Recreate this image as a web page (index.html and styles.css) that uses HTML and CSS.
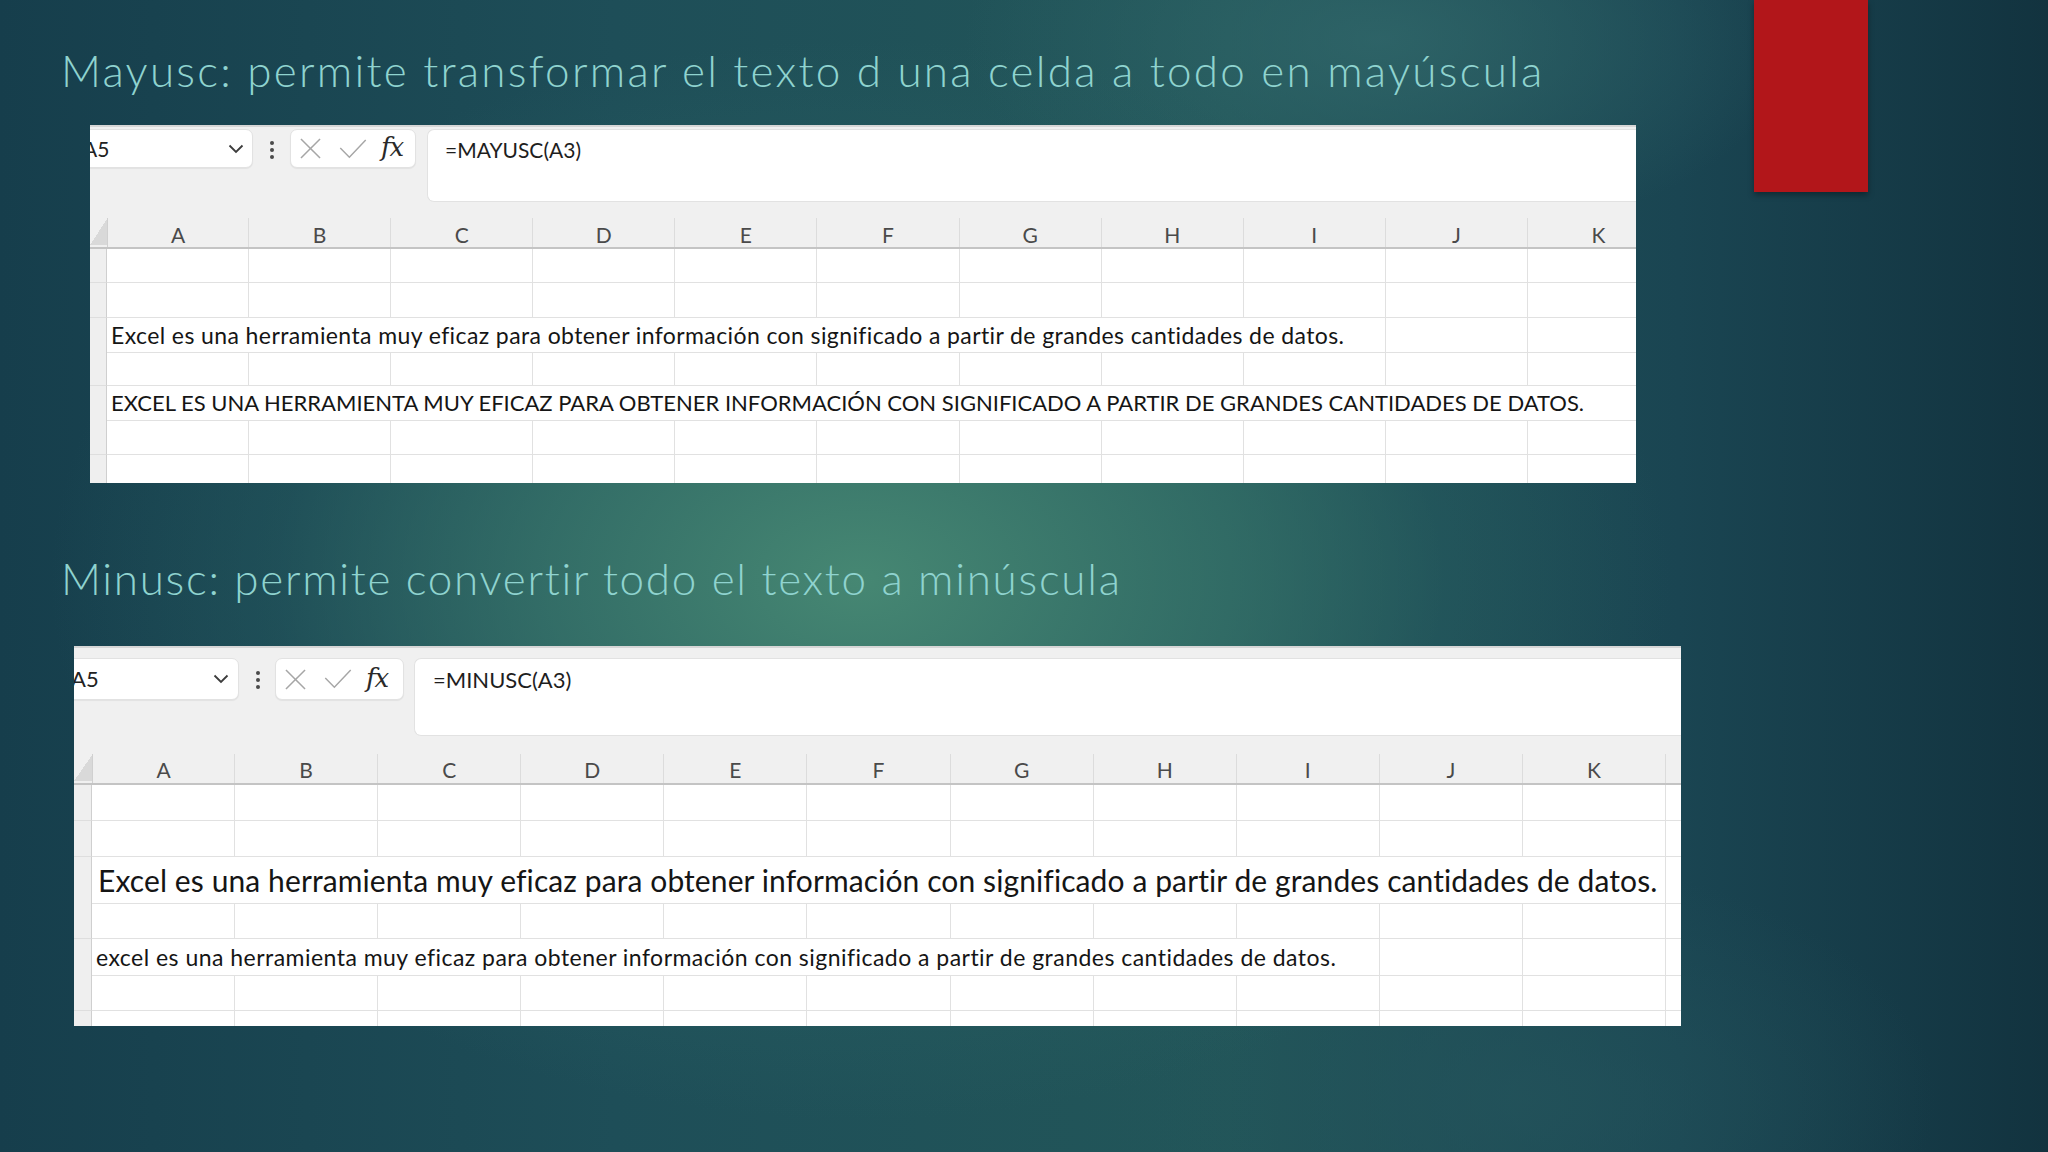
FILE: index.html
```html
<!DOCTYPE html>
<html lang="es">
<head>
<meta charset="utf-8">
<title>Mayusc y Minusc</title>
<link rel="stylesheet" href="styles.css">
</head>
<body>
<div class="slide">
  <div class="accent"></div>

  <h1 class="title title--one">Mayusc: permite transformar el texto d una celda a todo en mayúscula</h1>

  <div class="sheet sheet--one">
    <div class="fbar">
      <div class="namebox"><span class="ref">A5</span>
        <svg class="chev" viewBox="0 0 16 10"><polyline points="1.5,1.5 8,8 14.5,1.5"/></svg>
      </div>
      <div class="vdots"><i></i><i></i><i></i></div>
      <div class="iconbox">
        <svg class="ic-x" viewBox="0 0 22 22"><line x1="1" y1="1" x2="21" y2="21"/><line x1="21" y1="1" x2="1" y2="21"/></svg>
        <svg class="ic-ok" viewBox="0 0 30 22"><polyline points="1,10 11,20 29,1"/></svg>
        <span class="fx">fx</span>
      </div>
      <div class="formula">=MAYUSC(A3)</div>
    </div>
    <div class="colhead">
      <div class="corner"></div>
      <div class="ch">A</div><div class="ch">B</div><div class="ch">C</div><div class="ch">D</div><div class="ch">E</div><div class="ch">F</div><div class="ch">G</div><div class="ch">H</div><div class="ch">I</div><div class="ch">J</div><div class="ch">K</div><div class="ch"></div>
    </div>
    <div class="row"><div class="rh"></div><div class="c"></div><div class="c"></div><div class="c"></div><div class="c"></div><div class="c"></div><div class="c"></div><div class="c"></div><div class="c"></div><div class="c"></div><div class="c"></div><div class="c"></div><div class="c"></div></div>
    <div class="row"><div class="rh"></div><div class="c"></div><div class="c"></div><div class="c"></div><div class="c"></div><div class="c"></div><div class="c"></div><div class="c"></div><div class="c"></div><div class="c"></div><div class="c"></div><div class="c"></div><div class="c"></div></div>
    <div class="row"><div class="rh"></div><div class="c txt span9">Excel es una herramienta muy eficaz para obtener información con significado a partir de grandes cantidades de datos.</div><div class="c"></div><div class="c"></div><div class="c"></div></div>
    <div class="row"><div class="rh"></div><div class="c"></div><div class="c"></div><div class="c"></div><div class="c"></div><div class="c"></div><div class="c"></div><div class="c"></div><div class="c"></div><div class="c"></div><div class="c"></div><div class="c"></div><div class="c"></div></div>
    <div class="row"><div class="rh"></div><div class="c txt txt--caps span11">EXCEL ES UNA HERRAMIENTA MUY EFICAZ PARA OBTENER INFORMACIÓN CON SIGNIFICADO A PARTIR DE GRANDES CANTIDADES DE DATOS.</div><div class="c"></div></div>
    <div class="row"><div class="rh"></div><div class="c"></div><div class="c"></div><div class="c"></div><div class="c"></div><div class="c"></div><div class="c"></div><div class="c"></div><div class="c"></div><div class="c"></div><div class="c"></div><div class="c"></div><div class="c"></div></div>
    <div class="row"><div class="rh"></div><div class="c"></div><div class="c"></div><div class="c"></div><div class="c"></div><div class="c"></div><div class="c"></div><div class="c"></div><div class="c"></div><div class="c"></div><div class="c"></div><div class="c"></div><div class="c"></div></div>
  </div>

  <h1 class="title title--two">Minusc: permite convertir todo el texto a minúscula</h1>

  <div class="sheet sheet--two">
    <div class="fbar">
      <div class="namebox"><span class="ref">A5</span>
        <svg class="chev" viewBox="0 0 16 10"><polyline points="1.5,1.5 8,8 14.5,1.5"/></svg>
      </div>
      <div class="vdots"><i></i><i></i><i></i></div>
      <div class="iconbox">
        <svg class="ic-x" viewBox="0 0 22 22"><line x1="1" y1="1" x2="21" y2="21"/><line x1="21" y1="1" x2="1" y2="21"/></svg>
        <svg class="ic-ok" viewBox="0 0 30 22"><polyline points="1,10 11,20 29,1"/></svg>
        <span class="fx">fx</span>
      </div>
      <div class="formula">=MINUSC(A3)</div>
    </div>
    <div class="colhead">
      <div class="corner"></div>
      <div class="ch">A</div><div class="ch">B</div><div class="ch">C</div><div class="ch">D</div><div class="ch">E</div><div class="ch">F</div><div class="ch">G</div><div class="ch">H</div><div class="ch">I</div><div class="ch">J</div><div class="ch">K</div><div class="ch"></div>
    </div>
    <div class="row"><div class="rh"></div><div class="c"></div><div class="c"></div><div class="c"></div><div class="c"></div><div class="c"></div><div class="c"></div><div class="c"></div><div class="c"></div><div class="c"></div><div class="c"></div><div class="c"></div><div class="c"></div></div>
    <div class="row"><div class="rh"></div><div class="c"></div><div class="c"></div><div class="c"></div><div class="c"></div><div class="c"></div><div class="c"></div><div class="c"></div><div class="c"></div><div class="c"></div><div class="c"></div><div class="c"></div><div class="c"></div></div>
    <div class="row row--big"><div class="rh"></div><div class="c txt txt--big span11">Excel es una herramienta muy eficaz para obtener información con significado a partir de grandes cantidades de datos.</div><div class="c"></div></div>
    <div class="row"><div class="rh"></div><div class="c"></div><div class="c"></div><div class="c"></div><div class="c"></div><div class="c"></div><div class="c"></div><div class="c"></div><div class="c"></div><div class="c"></div><div class="c"></div><div class="c"></div><div class="c"></div></div>
    <div class="row"><div class="rh"></div><div class="c txt txt--wide span9">excel es una herramienta muy eficaz para obtener información con significado a partir de grandes cantidades de datos.</div><div class="c"></div><div class="c"></div><div class="c"></div></div>
    <div class="row"><div class="rh"></div><div class="c"></div><div class="c"></div><div class="c"></div><div class="c"></div><div class="c"></div><div class="c"></div><div class="c"></div><div class="c"></div><div class="c"></div><div class="c"></div><div class="c"></div><div class="c"></div></div>
    <div class="row"><div class="rh"></div><div class="c"></div><div class="c"></div><div class="c"></div><div class="c"></div><div class="c"></div><div class="c"></div><div class="c"></div><div class="c"></div><div class="c"></div><div class="c"></div><div class="c"></div><div class="c"></div></div>
  </div>
</div>
</body>
</html>
```
FILE: styles.css
```css
* { box-sizing: border-box; }
html, body { margin: 0; padding: 0; }
body { width: 2048px; height: 1152px; overflow: hidden; font-family: "Lato", "Liberation Sans", sans-serif; }

.slide {
  position: relative;
  width: 2048px;
  height: 1152px;
  overflow: hidden;
  padding-top: 40px;
  background:
    radial-gradient(ellipse 900px 600px at 860px 580px, rgba(72,138,116,0.95) 0%, rgba(58,120,108,0.75) 35%, rgba(42,98,100,0.35) 65%, rgba(30,80,90,0) 90%),
    radial-gradient(ellipse 520px 260px at 1380px 40px, rgba(50,105,108,0.75), rgba(50,105,108,0) 80%),
    radial-gradient(ellipse 520px 300px at 1520px 1100px, rgba(36,84,92,0.7), rgba(36,84,92,0) 80%),
    linear-gradient(90deg, #163e4c 0%, #1e4e58 30%, #225659 60%, #1a4552 82%, #12333f 100%);
}

.accent {
  position: absolute;
  left: 1754px;
  top: 0;
  width: 114px;
  height: 192px;
  background: #b2161a;
  box-shadow: 0 3px 6px rgba(0,0,0,0.35);
}

.title {
  margin: 0;
  padding-left: 61px;
  height: 60px;
  line-height: 60px;
  font-family: "Lato", sans-serif;
  font-weight: 300;
  font-size: 44px;
  color: #8fd3cf;
  white-space: nowrap;
}
.title--one { letter-spacing: 2.25px; }
.title--two { margin-top: 65px; letter-spacing: 1.7px; }

/* ---------- spreadsheet panels ---------- */
.sheet {
  background: #f0f0f0;
  overflow: hidden;
  border-top: 2px solid #d6d6d6;
  font-family: "Lato", sans-serif;
}
.sheet--one {
  --rh: 17px;
  --cw: 142.1px;
  --rowh: 34.3px;
  margin: 25px 0 0 90px;
  width: 1546px;
  height: 358px;
}
.sheet--two {
  --rh: 18px;
  --cw: 143.1px;
  --rowh: 36px;
  margin: 38px 0 0 74px;
  width: 1607px;
  height: 380px;
}

.fbar { display: flex; align-items: flex-start; }
.sheet--one .fbar { padding-top: 2px; height: 75px; }
.sheet--two .fbar { padding-top: 10px; height: 88px; }

.namebox {
  display: flex;
  align-items: center;
  justify-content: space-between;
  background: #fff;
  border-radius: 7px;
  border: 1px solid #e2e2e2;
  box-shadow: 0 1px 1px rgba(0,0,0,0.06);
  color: #222;
}
.sheet--one .namebox { margin-left: -12px; width: 175px; height: 39px; padding: 0 8px 0 4px; font-size: 21px; }
.sheet--two .namebox { margin-left: -8px; width: 173px; height: 42px; padding: 0 9px 0 4px; font-size: 22px; }
.ref { line-height: 1; }
.chev { width: 16px; height: 10px; fill: none; stroke: #3c3c3c; stroke-width: 1.8; }

.vdots { display: flex; flex-direction: column; gap: 3px; }
.sheet--one .vdots { margin: 12px 0 0 17px; }
.sheet--two .vdots { margin: 13px 0 0 17px; }
.vdots i { display: block; width: 4px; height: 4px; border-radius: 50%; background: #4a4a4a; }

.iconbox {
  display: flex;
  align-items: center;
  background: #fff;
  border-radius: 7px;
  border: 1px solid #e2e2e2;
  box-shadow: 0 1px 1px rgba(0,0,0,0.06);
}
.sheet--one .iconbox { margin-left: 16px; width: 126px; height: 39px; padding: 0 0 0 9px; }
.sheet--two .iconbox { margin-left: 15px; width: 129px; height: 42px; padding: 0 0 0 9px; }
.ic-x { width: 21px; height: 21px; stroke: #a6a6a6; stroke-width: 1.6; }
.ic-ok { width: 28px; height: 20px; margin-left: 18px; fill: none; stroke: #a6a6a6; stroke-width: 1.6; }
.fx {
  margin-left: 14px;
  font-family: "DejaVu Serif", "Liberation Serif", serif;
  font-style: italic;
  font-size: 26px;
  line-height: 1;
  color: #2a2a2a;
  margin-top: -3px;
  letter-spacing: -1px;
}

.formula {
  flex: 1;
  background: #fff;
  border-radius: 7px 0 0 7px;
  border: 1px solid #e2e2e2;
  border-right: none;
  color: #1e1e1e;
  white-space: nowrap;
}
.sheet--one .formula { margin-left: 11px; height: 73px; padding: 8px 0 0 17px; font-size: 21px; line-height: 24px; }
.sheet--two .formula { margin-left: 10px; height: 78px; padding: 8px 0 0 18px; font-size: 22px; line-height: 26px; }

.colhead, .row {
  display: grid;
  grid-template-columns: var(--rh) repeat(12, var(--cw));
}
.colhead { border-bottom: 2px solid #c4c4c4; align-items: end; }
.sheet--one .colhead { height: 47px; }
.sheet--two .colhead { height: 49px; }
.corner {
  height: 26px;
  margin-bottom: 2px;
  background: linear-gradient(to top left, #d9d9d9 50%, transparent 50%);
}
.ch {
  height: 29px;
  border-right: 1px solid #dcdcdc;
  text-align: center;
  font-size: 21px;
  line-height: 26px;
  padding-top: 4px;
  color: #4a4a4a;
}
.sheet--two .ch { padding-top: 3px; }
.colhead .corner + .ch { border-left: 1px solid #d0d0d0; }

.row { height: var(--rowh); background: #fff; }
.row--big { height: 46px; }
.rh { background: #efefef; border-right: 1px solid #cfcfcf; border-bottom: 1px solid #dedede; }
.c { border-right: 1px solid #e1e1e1; border-bottom: 1px solid #e1e1e1; min-width: 0; }
.span9 { grid-column: span 9; }
.span11 { grid-column: span 11; }
.txt {
  white-space: nowrap;
  color: #151515;
  font-size: 23px;
  letter-spacing: 0.4px;
  line-height: var(--rowh);
  padding-left: 4px;
}
.txt--caps { font-size: 22px; letter-spacing: 0; }
.txt--wide { letter-spacing: 0.47px; }
.txt--big { font-size: 30px; letter-spacing: 0.1px; line-height: 46px; padding-left: 6px; }
```
